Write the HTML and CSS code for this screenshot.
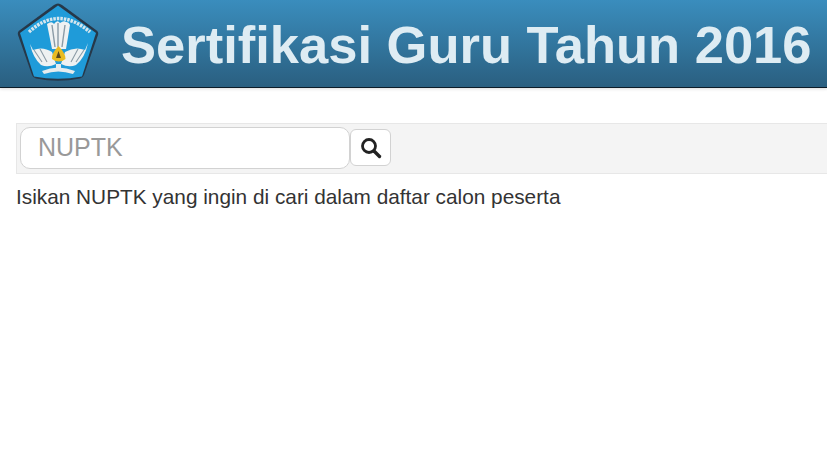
FILE: index.html
```html
<!DOCTYPE html>
<html lang="id">
<head>
    <meta charset="UTF-8">
    <meta name="viewport" content="width=device-width, initial-scale=1.0">
    <title>Sertifikasi Guru Tahun 2016</title>
    <link rel="stylesheet" href="styles.css">
</head>
<body>

    <header class="header">
        <svg class="logo" viewBox="0 0 84 84" width="84" height="84" aria-hidden="true">
            <defs>
                <filter id="soft"><feGaussianBlur stdDeviation="0.45"/></filter>
            </defs>
            <path d="M42 1.5 Q44 1.5 46 3 L80 28 Q83 30 82 33 L68 73 Q67 76 64 76.5 Q42 81 20 76.5 Q17 76 16 73 L2 33 Q1 30 4 28 L38 3 Q40 1.5 42 1.5 Z" fill="#26384a" filter="url(#soft)"/>
            <path d="M42 3.5 L80 31 L66 74.5 Q42 79 18 74.5 L4 31 Z" fill="#1f9bd9"/>
            <g filter="url(#soft)">
                <path d="M13 30 Q42 3 74 30" fill="none" stroke="#d5e6ee" stroke-width="3.5" stroke-dasharray="2.5 1"/>
                <path d="M31 22 Q35 19 37 21 L38 22 Q41 18 43 20 L44 21 Q48 18 50 20 Q53 20 54 23 L50 47 L36 47 Z" fill="#eef1f2"/>
                <path d="M36 23 L39 45 M42 21 V45 M49 23 L46 45" stroke="#8b9ba6" stroke-width="1.4"/>
                <path d="M14 42 L17 48 Q27 44 36 50 L40 62 Q32 66 25 63 Q17 56 14 42 Z" fill="#eef1f2"/>
                <path d="M72 41 L69 48 Q59 44 49 50 L45 62 Q53 66 60 63 Q69 56 72 41 Z" fill="#eef1f2"/>
                <path d="M18 48 L26 60 M24 47 L31 60 M68 48 L60 60 M62 47 L55 60" stroke="#8b9ba6" stroke-width="1.1"/>
                <path d="M26 69 Q42 62 59 69 L57 72 Q42 67 28 72 Z" fill="#e6ecee"/>
                <path d="M40 62 H45 V68 H40 Z" fill="#e6ecee"/>
                <path d="M42.5 44 Q50 52 49.5 57 Q43 62 36 57 Q35 52 42.5 44 Z" fill="#e9bb22"/>
                <path d="M42.5 49 L45 56 H40 Z" fill="#5b4a1e"/>
            </g>
        </svg>
        <h1 class="title">Sertifikasi Guru Tahun 2016</h1>
    </header>

    <main class="content">
        <form class="search-bar">
            <input class="search-input" type="text" placeholder="NUPTK">
            <button class="search-btn" type="button" aria-label="Cari">
                <svg viewBox="0 0 22 22" width="22" height="22">
                    <circle cx="9" cy="9" r="6.5" fill="none" stroke="#222" stroke-width="2.8"/>
                    <path d="M14 14 L19.5 19.5" stroke="#222" stroke-width="3.4" stroke-linecap="round"/>
                </svg>
            </button>
        </form>
        <p class="hint">Isikan NUPTK yang ingin di cari dalam daftar calon peserta</p>
    </main>

</body>
</html>
```

FILE: styles.css
```css
body {
    font-family: "Liberation Sans", Arial, sans-serif;
    margin: 0;
    background-color: #fff;
    color: #333;
    overflow: hidden;
}
.header {
    display: flex;
    align-items: center;
    height: 87px;
    padding-left: 16px;
    gap: 21px;
    background: linear-gradient(to bottom, #3a8dbd, #2a5f80);
    border-bottom: 1px solid #0c1c28;
    box-shadow: 0 1px 3px rgba(0, 0, 0, 0.15);
}
.logo {
    flex-shrink: 0;
}
.title {
    margin: 0 0 -2px;
    font-size: 52.5px;
    font-weight: bold;
    color: #deecf3;
    white-space: nowrap;
}
.content {
    padding: 35px 0 0 16px;
}
.search-bar {
    display: flex;
    align-items: center;
    height: 47px;
    padding: 0 0 2px 3px;
    background-color: #f4f4f4;
    border: 1px solid #e7e7e7;
    border-right: none;
}
.search-input {
    width: 330px;
    height: 42px;
    box-sizing: border-box;
    padding: 0 17px;
    font-family: inherit;
    font-size: 25px;
    color: #555;
    background-color: #fff;
    border: 1px solid #d2d2d2;
    border-radius: 10px;
}
.search-input::placeholder {
    color: #999;
}
.search-btn {
    display: flex;
    align-items: center;
    justify-content: center;
    width: 41px;
    height: 37px;
    padding: 0;
    background-color: #fff;
    border: 1px solid #d2d2d2;
    border-radius: 6px;
}
.hint {
    margin: 11px 0 0;
    font-size: 20.8px;
    line-height: 24px;
}
```
